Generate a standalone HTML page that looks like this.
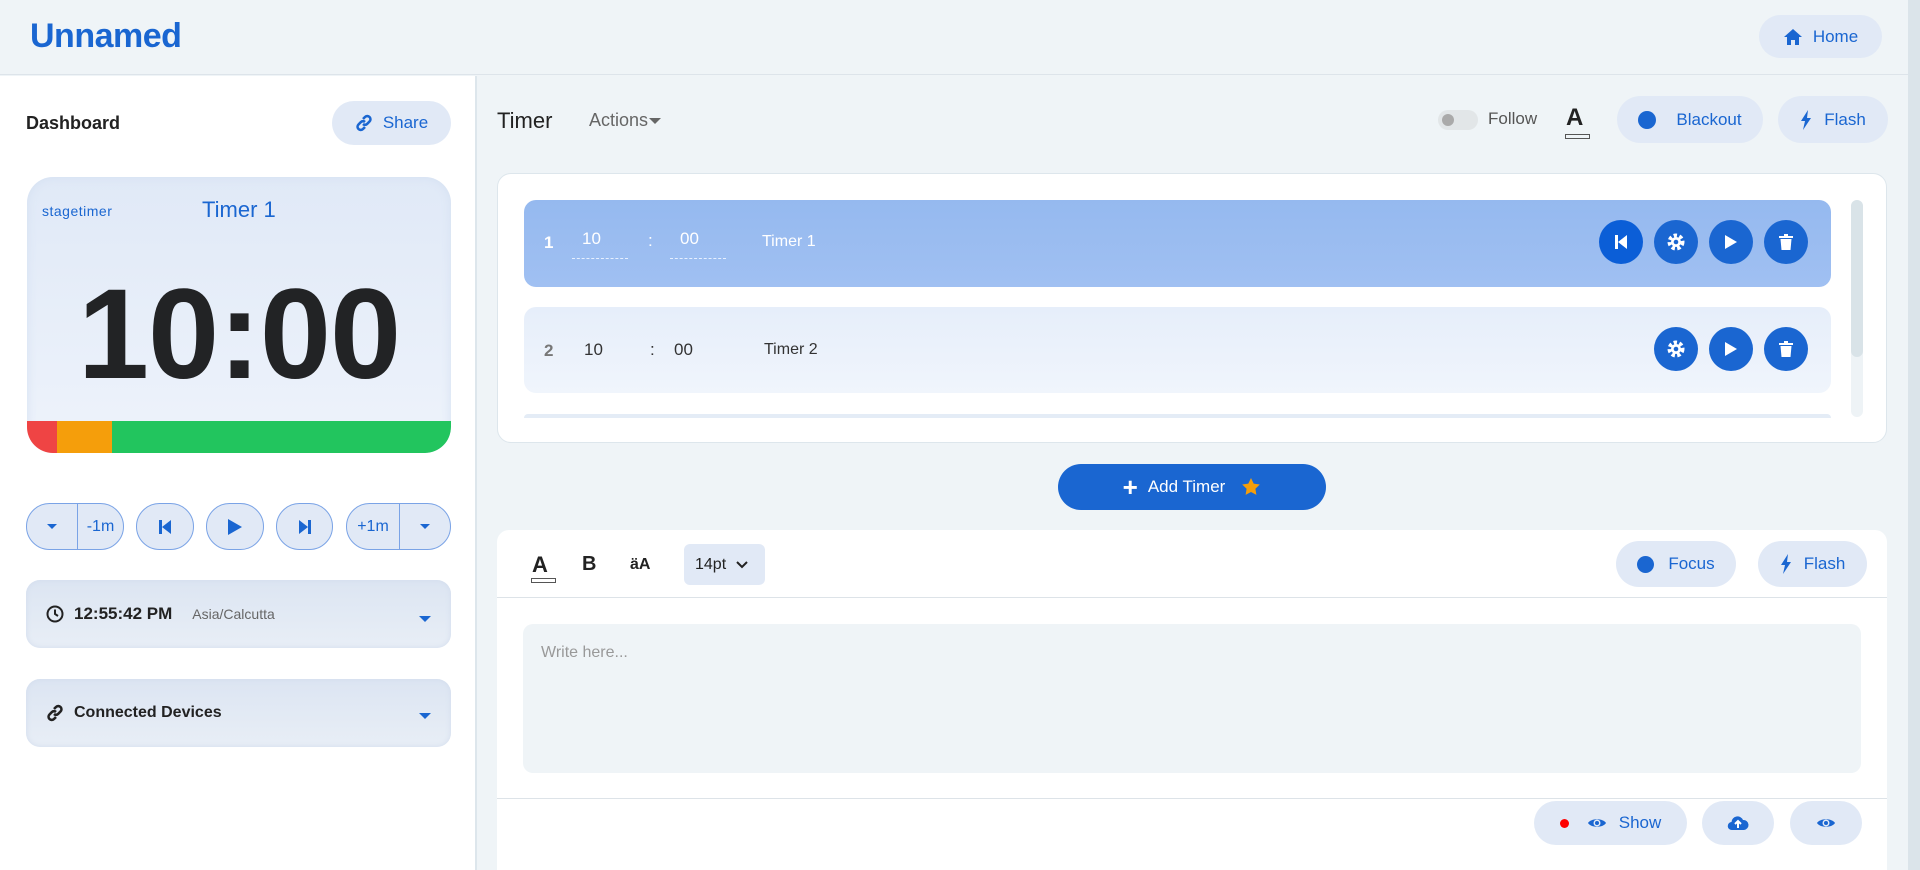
<!DOCTYPE html>
<html><head><meta charset="utf-8"><style>
*{box-sizing:border-box;margin:0;padding:0}
body{width:1920px;height:870px;overflow:hidden;background:#eff4f7;font-family:"Liberation Sans",sans-serif;position:relative;color:#222}
.a{position:absolute}
.pill{position:absolute;background:#e1e9f6;border-radius:999px;color:#1a66d1;display:flex;align-items:center;justify-content:center;font-size:17px;gap:10px}
.circ{position:absolute;width:44px;height:44px;border-radius:50%;background:#1a66d1;display:flex;align-items:center;justify-content:center}
.ob{position:absolute;top:503px;height:47px;border:1px solid #7aa3e6;background:#e1e9f6;border-radius:24px;display:flex;align-items:center;justify-content:center;color:#1a66d1;font-size:16px}
.card{position:absolute;left:26px;width:425px;border-radius:14px;background:linear-gradient(#dce5f2,#e8eef6);box-shadow:inset 0 0 6px #d2dced;display:flex;align-items:center;padding-left:20px;font-size:16px}
.caret{position:absolute;right:20px;width:0;height:0;border-left:6px solid transparent;border-right:6px solid transparent;border-top:6px solid #1a66d1}
</style></head><body>
<div class="a" style="left:0;top:0;width:1908px;height:75px;border-bottom:1px solid #dde4ea"></div>
<div class="a" style="left:30px;top:17px;font-size:34px;font-weight:bold;color:#1a66d1;letter-spacing:-0.5px">Unnamed</div>
<div class="pill" style="left:1759px;top:15px;width:123px;height:43px"><svg width="20" height="18" viewBox="0 0 20 18"><path d="M10 1L1 9h3v8h4v-5h4v5h4V9h3z" fill="#1a66d1"/></svg>Home</div>
<div class="a" style="left:1908px;top:0;width:12px;height:870px;background:#dbe4ea"></div>

<div class="a" style="left:0;top:76px;width:477px;height:794px;background:#fff;border-right:2px solid #dde6ec"></div>
<div class="a" style="left:26px;top:113px;font-size:18px;font-weight:bold;color:#222">Dashboard</div>
<div class="pill" style="left:332px;top:101px;width:119px;height:44px"><svg width="18" height="18" viewBox="0 0 18 18" fill="none" stroke="#1a66d1" stroke-width="2.6"><path d="M8 5l2-2a3 3 0 0 1 4.5 4.5l-2.5 2.5a3 3 0 0 1-4 0M10 13l-2 2a3 3 0 0 1-4.5-4.5L6 8a3 3 0 0 1 4 0"/></svg>Share</div>

<div class="a" style="left:27px;top:177px;width:424px;height:276px;border-radius:26px;overflow:hidden;background:linear-gradient(#e0e9f7,#eef3fb);box-shadow:inset 0 0 10px #d4e0f1">
 <div class="a" style="left:15px;top:26px;font-size:14px;color:#1a66d1;letter-spacing:0.5px">stagetimer</div>
 <div class="a" style="left:175px;top:20px;font-size:22px;color:#1a66d1">Timer 1</div>
 <div class="a" style="left:0;width:424px;top:84px;text-align:center;font-size:128px;font-weight:bold;color:#222325;letter-spacing:-1px">10:00</div>
 <div class="a" style="left:0;top:244px;width:30px;height:32px;background:#ef4444"></div>
 <div class="a" style="left:30px;top:244px;width:55px;height:32px;background:#f59e0b"></div>
 <div class="a" style="left:85px;top:244px;width:339px;height:32px;background:#22c55e;border-radius:0 0 26px 0"></div>
</div>

<div class="ob" style="left:26px;width:98px;justify-content:flex-start"><span style="width:51px;height:100%;border-right:1px solid #7aa3e6;display:flex;align-items:center;justify-content:center"><span style="border-left:5px solid transparent;border-right:5px solid transparent;border-top:5px solid #1a66d1"></span></span><span style="flex:1;text-align:center">-1m</span></div>
<div class="ob" style="left:136px;width:58px"><svg width="14" height="16"><path d="M1 1h3v14H1zM13 1v14L4 8z" fill="#1a66d1"/></svg></div>
<div class="ob" style="left:206px;width:58px"><svg width="16" height="18"><path d="M1 1l14 8-14 8z" fill="#1a66d1"/></svg></div>
<div class="ob" style="left:276px;width:57px"><svg width="14" height="16"><path d="M10 1h3v14h-3zM1 1v14l9-7z" fill="#1a66d1"/></svg></div>
<div class="ob" style="left:346px;width:105px;justify-content:flex-start"><span style="width:53px;height:100%;border-right:1px solid #7aa3e6;display:flex;align-items:center;justify-content:center">+1m</span><span style="flex:1;display:flex;justify-content:center"><span style="border-left:5px solid transparent;border-right:5px solid transparent;border-top:5px solid #1a66d1"></span></span></div>

<div class="card" style="top:580px;height:68px"><svg width="18" height="18" viewBox="0 0 18 18" fill="none" stroke="#222" stroke-width="2"><circle cx="9" cy="9" r="7.5"/><path d="M9 4.5V9l3 2"/></svg><span style="margin-left:10px;font-weight:bold;font-size:17px">12:55:42 PM</span><span style="margin-left:20px;font-size:14px;color:#666">Asia/Calcutta</span><span class="caret" style="top:36px"></span></div>
<div class="card" style="top:679px;height:68px"><svg width="18" height="18" viewBox="0 0 18 18" fill="none" stroke="#222" stroke-width="2.6"><path d="M8 5l2-2a3 3 0 0 1 4.5 4.5l-2.5 2.5a3 3 0 0 1-4 0M10 13l-2 2a3 3 0 0 1-4.5-4.5L6 8a3 3 0 0 1 4 0"/></svg><span style="margin-left:10px;font-weight:bold;font-size:16px">Connected Devices</span><span class="caret" style="top:34px"></span></div>

<div class="a" style="left:497px;top:108px;font-size:22px;color:#222">Timer</div>
<div class="a" style="left:589px;top:110px;font-size:18px;color:#666">Actions <span style="display:inline-block;border-left:6px solid transparent;border-right:6px solid transparent;border-top:6px solid #666;vertical-align:middle;margin-left:-4px"></span></div>
<div class="a" style="left:1438px;top:110px;width:40px;height:20px;border-radius:10px;background:#e2e6e8"><div class="a" style="left:4px;top:4px;width:12px;height:12px;border-radius:50%;background:#aaa"></div></div>
<div class="a" style="left:1488px;top:109px;font-size:17px;color:#555">Follow</div>
<div class="a" style="left:1566px;top:104px;font-size:24px;font-weight:bold;color:#222">A</div>
<div class="a" style="left:1565px;top:134px;width:25px;height:5px;border:1px solid #555"></div>
<div class="pill" style="left:1617px;top:96px;width:146px;height:47px;gap:20px"><span style="width:18px;height:18px;border-radius:50%;background:#1a66d1"></span>Blackout</div>
<div class="pill" style="left:1778px;top:96px;width:110px;height:47px;gap:12px"><svg width="12" height="20"><path d="M8 0L1 11h4l-2 9 8-12H7z" fill="#1a66d1"/></svg>Flash</div>

<div class="a" style="left:497px;top:173px;width:1390px;height:270px;background:#fff;border:1px solid #dde6ec;border-radius:14px;overflow:hidden">
 <div class="a" style="left:26px;top:26px;width:1307px;height:87px;border-radius:12px;background:linear-gradient(#95b9ef,#a0c0f2);color:#fff">
  <div class="a" style="left:20px;top:33px;font-size:17px;font-weight:bold">1</div>
  <div class="a" style="left:48px;top:29px;width:56px;padding-left:10px;font-size:17px;border-bottom:1px dashed #e6efff;height:30px">10</div>
  <div class="a" style="left:124px;top:31px;font-size:17px">:</div>
  <div class="a" style="left:146px;top:29px;width:56px;padding-left:10px;font-size:17px;border-bottom:1px dashed #e6efff;height:30px">00</div>
  <div class="a" style="left:238px;top:33px;font-size:16px">Timer 1</div>
 </div>
 <div class="a" style="left:26px;top:133px;width:1307px;height:86px;border-radius:12px;background:linear-gradient(#e6eefa,#f0f5fc);color:#333">
  <div class="a" style="left:20px;top:34px;font-size:17px;font-weight:bold;color:#777">2</div>
  <div class="a" style="left:60px;top:33px;font-size:17px">10</div>
  <div class="a" style="left:126px;top:33px;font-size:17px">:</div>
  <div class="a" style="left:150px;top:33px;font-size:17px">00</div>
  <div class="a" style="left:240px;top:34px;font-size:16px">Timer 2</div>
 </div>
 <div class="a" style="left:26px;top:240px;width:1307px;height:4px;border-radius:4px 4px 0 0;background:#e4ecf6"></div>
 <div class="a" style="left:1353px;top:26px;width:12px;height:217px;border-radius:6px;background:#eef3f6"><div style="height:157px;border-radius:6px;background:#d9e3e8"></div></div>
</div>
<!-- row buttons -->
<div class="circ" style="left:1599px;top:220px;background:#0b5ed7"><svg width="14" height="16"><path d="M1 1h3v14H1zM13 1v14L4 8z" fill="#fff"/></svg></div>
<div class="circ" style="left:1654px;top:220px"><svg width="18" height="18" viewBox="0 0 18 18"><circle cx="9" cy="9" r="6" fill="none" stroke="#fff" stroke-width="5" stroke-dasharray="3 2.2"/><circle cx="9" cy="9" r="5" fill="#fff"/><circle cx="9" cy="9" r="2.3" fill="#1a66d1"/></svg></div>
<div class="circ" style="left:1709px;top:220px"><svg width="14" height="16"><path d="M1 1l12 7-12 7z" fill="#fff"/></svg></div>
<div class="circ" style="left:1764px;top:220px"><svg width="14" height="16"><path d="M0 2h14v2H0zM5 0h4v2H5zM1.5 5h11l-1 11h-9z" fill="#fff"/></svg></div>
<div class="circ" style="left:1654px;top:327px"><svg width="18" height="18" viewBox="0 0 18 18"><circle cx="9" cy="9" r="6" fill="none" stroke="#fff" stroke-width="5" stroke-dasharray="3 2.2"/><circle cx="9" cy="9" r="5" fill="#fff"/><circle cx="9" cy="9" r="2.3" fill="#1a66d1"/></svg></div>
<div class="circ" style="left:1709px;top:327px"><svg width="14" height="16"><path d="M1 1l12 7-12 7z" fill="#fff"/></svg></div>
<div class="circ" style="left:1764px;top:327px"><svg width="14" height="16"><path d="M0 2h14v2H0zM5 0h4v2H5zM1.5 5h11l-1 11h-9z" fill="#fff"/></svg></div>

<div class="a" style="left:1058px;top:464px;width:268px;height:46px;border-radius:23px;background:#1a66d1;color:#fff;display:flex;align-items:center;justify-content:center;font-size:17px;gap:10px"><span style="font-size:26px;font-weight:bold;line-height:1">+</span>Add Timer<svg width="20" height="20" viewBox="0 0 20 20" style="margin-left:6px"><path d="M10 1l2.7 5.6 6.1.9-4.4 4.3 1 6.1L10 15l-5.4 2.9 1-6.1L1.2 7.5l6.1-.9z" fill="#f59e0b"/></svg></div>

<div class="a" style="left:497px;top:530px;width:1390px;height:340px;background:#fff;border-radius:12px 12px 0 0">
 <div class="a" style="left:0;top:67px;width:1390px;height:1px;background:#dde3e8"></div>
 <div class="a" style="left:0;top:268px;width:1390px;height:1px;background:#dde3e8"></div>
 <div class="a" style="left:35px;top:22px;font-size:22px;font-weight:bold;color:#222">A</div>
 <div class="a" style="left:34px;top:48px;width:25px;height:5px;border:1px solid #555"></div>
 <div class="a" style="left:85px;top:23px;font-size:20px;font-weight:bold;color:#222">B</div>
 <div class="a" style="left:133px;top:26px;font-size:16px;font-weight:bold;color:#222">äA</div>
 <div class="a" style="left:187px;top:14px;width:81px;height:41px;border-radius:6px;background:#e1e9f6;display:flex;align-items:center;padding-left:11px;font-size:16px;color:#222">14pt <svg width="12" height="8" style="margin-left:10px"><path d="M1 1l5 5 5-5" fill="none" stroke="#222" stroke-width="2"/></svg></div>
 <div class="pill" style="left:1119px;top:11px;width:120px;height:46px;gap:14px"><span style="width:17px;height:17px;border-radius:50%;background:#1a66d1"></span>Focus</div>
 <div class="pill" style="left:1261px;top:11px;width:109px;height:46px;gap:12px"><svg width="12" height="20"><path d="M8 0L1 11h4l-2 9 8-12H7z" fill="#1a66d1"/></svg>Flash</div>
 <div class="a" style="left:26px;top:94px;width:1338px;height:149px;border-radius:10px;background:#eff4f7;padding:20px 18px;font-size:16px;color:#999">Write here...</div>
 <div class="pill" style="left:1037px;top:271px;width:153px;height:44px;gap:12px"><span style="width:9px;height:9px;border-radius:50%;background:#f00;margin-right:6px"></span><svg width="20" height="14" viewBox="0 0 20 14"><path d="M1 7C4 2 16 2 19 7 16 12 4 12 1 7z" fill="#1a66d1"/><circle cx="10" cy="7" r="3.5" fill="#e1e9f6"/><circle cx="10" cy="7" r="2" fill="#1a66d1"/></svg>Show</div>
 <div class="pill" style="left:1205px;top:271px;width:72px;height:44px"><svg width="22" height="16" viewBox="0 0 22 16"><path d="M5 15a4 4 0 0 1-.5-8A6 6 0 0 1 16 5a5 5 0 0 1 1 10z" fill="#1a66d1"/><path d="M11 13V7M8 9l3-3 3 3" stroke="#fff" stroke-width="2" fill="none"/></svg></div>
 <div class="pill" style="left:1293px;top:271px;width:72px;height:44px"><svg width="20" height="14" viewBox="0 0 20 14"><path d="M1 7C4 2 16 2 19 7 16 12 4 12 1 7z" fill="#1a66d1"/><circle cx="10" cy="7" r="3.5" fill="#e1e9f6"/><circle cx="10" cy="7" r="2" fill="#1a66d1"/></svg></div>
</div>
</body></html>
